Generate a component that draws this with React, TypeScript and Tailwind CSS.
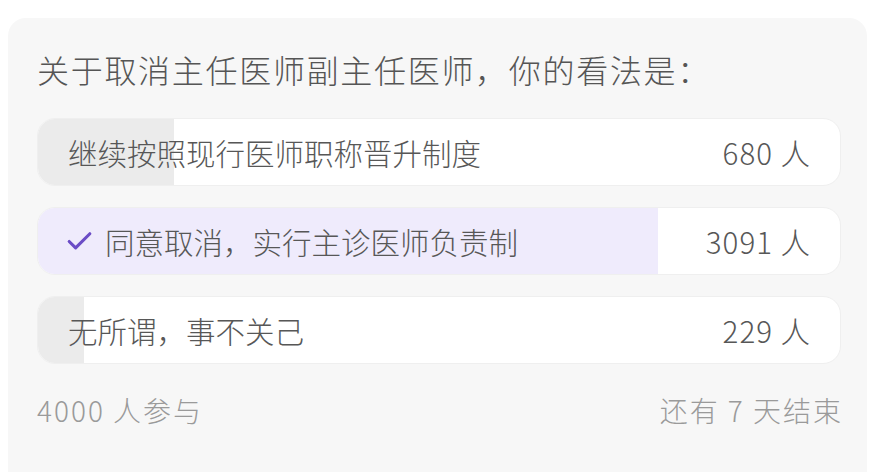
import { Check } from 'lucide-react';

type Option = {
  label: string;
  count: number;
  checked?: boolean;
};

const TOTAL = 4000;

const options: Option[] = [
  { label: '继续按照现行医师职称晋升制度', count: 680 },
  { label: '同意取消，实行主诊医师负责制', count: 3091, checked: true },
  { label: '无所谓，事不关己', count: 229 },
];

export default function App() {
  return (
    <div
      className="w-[875px] h-[472px] overflow-hidden bg-white pt-[18px] px-[8px] font-light"
      style={{ fontFamily: '"Noto Sans CJK SC", "Noto Sans", sans-serif' }}
    >
      <div className="h-[480px] rounded-[18px] bg-[#f7f7f7] pt-[31px] pl-[29px] pr-[26px]">
        {/* Question */}
        <h1 className="text-[32px] leading-[40px] tracking-[1.7px] text-[#555555] font-light">
          关于取消主任医师副主任医师，你的看法是：
        </h1>

        {/* Options */}
        <div className="mt-[29px] flex flex-col gap-[21px]">
          {options.map((opt) => {
            const pct = (opt.count / TOTAL) * 100;
            return (
              <div
                key={opt.label}
                className="relative h-[68px] rounded-[18px] bg-white border border-[#efefef] overflow-hidden"
              >
                <div
                  className={opt.checked ? 'absolute inset-y-0 left-0 bg-[#efebfc]' : 'absolute inset-y-0 left-0 bg-[#ebebeb]'}
                  style={{ width: `${pct}%` }}
                />
                <div className="relative h-full flex items-center justify-between pl-[30px] pr-[29px] text-[29.5px] text-[#575757]">
                  <div className="flex items-center">
                    {opt.checked && (
                      <Check className="w-[31px] h-[31px] text-[#6b4cc6] mr-[10px] -ml-[4px]" strokeWidth={2.4} />
                    )}
                    <span>{opt.label}</span>
                  </div>
                  <span className="tracking-[1px]">{opt.count} 人</span>
                </div>
              </div>
            );
          })}
        </div>

        {/* Footer */}
        <div className="mt-[27px] flex items-center justify-between text-[28px] leading-[38px] tracking-[2px] text-[#9a9a9a]">
          <span>{TOTAL} 人参与</span>
          <span className="-mr-[2px]">还有 7 天结束</span>
        </div>
      </div>
    </div>
  );
}
